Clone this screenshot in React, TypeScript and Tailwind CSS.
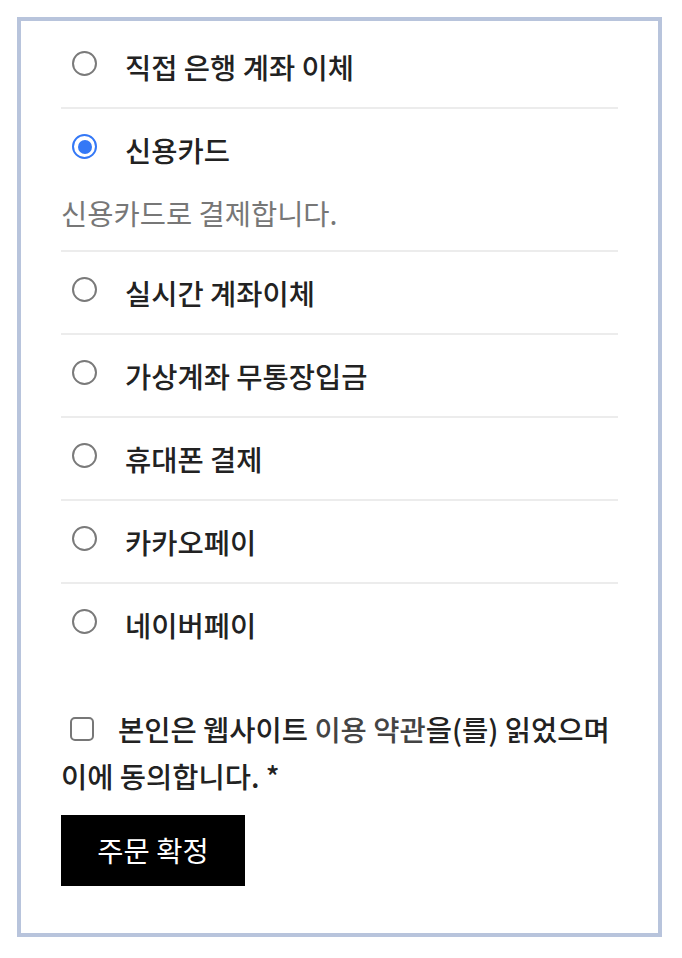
import React from "react";

const methods = [
  { label: "직접 은행 계좌 이체", checked: false },
  { label: "신용카드", checked: true, desc: "신용카드로 결제합니다." },
  { label: "실시간 계좌이체", checked: false },
  { label: "가상계좌 무통장입금", checked: false },
  { label: "휴대폰 결제", checked: false },
  { label: "카카오페이", checked: false },
  { label: "네이버페이", checked: false },
];

function Radio({ checked }: { checked: boolean }) {
  if (checked) {
    return (
      <span className="flex h-[25px] w-[25px] shrink-0 items-center justify-center rounded-full border-[2.5px] border-[#3478f6] bg-white">
        <span className="h-[14px] w-[14px] rounded-full bg-[#3478f6]" />
      </span>
    );
  }
  return <span className="h-[25px] w-[25px] shrink-0 rounded-full border-2 border-[#7a7a7a] bg-white" />;
}

export default function App() {
  return (
    <div
      className="min-h-[958px] bg-white pl-[17px] pt-[17px] text-[#222]"
      style={{ fontFamily: '"Noto Sans CJK KR", "Noto Sans", sans-serif' }}
    >
      <div className="w-[645px] border-4 border-[#b8c4dc] px-[40px] pb-[47px] pt-[5px]">
        <ul>
          {methods.map((m, i) => (
            <li
              key={m.label}
              className={
                "pt-[23px] pb-[22px] " +
                (i < methods.length - 1 ? "border-b-2 border-[#ececec]" : "")
              }
            >
              <div className="flex items-center">
                <span className="ml-[11px] mr-[28px] -mt-[7px] flex">
                  <Radio checked={m.checked} />
                </span>
                <span className="text-[28.5px] font-medium leading-[36px]">{m.label}</span>
              </div>
              {m.desc && (
                <p className="mt-[30px] text-[28.5px] font-normal leading-[30px] text-[#777]">
                  {m.desc}
                </p>
              )}
            </li>
          ))}
        </ul>
        <p className="mt-[40px] text-[28.5px] font-medium leading-[47px]">
          <span className="relative top-[-4px] ml-[9px] mr-[24px] inline-block h-[24px] w-[24px] rounded-[5px] border-2 border-[#777] align-middle" />
          본인은 웹사이트 <span className="text-[#444]">이용 약관</span>을(를) 읽었으며 이에 동의합니다. *
        </p>
        <button className="mt-[16px] flex h-[71px] w-[184px] items-center justify-center bg-black text-[28.5px] font-normal text-white">
          주문 확정
        </button>
      </div>
    </div>
  );
}
